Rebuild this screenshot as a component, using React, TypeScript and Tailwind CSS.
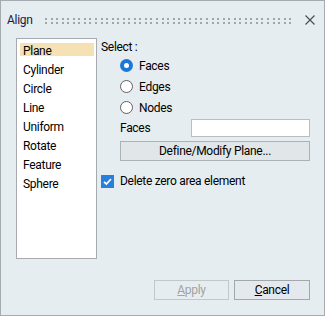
import React from "react";

const items = ["Plane", "Cylinder", "Circle", "Line", "Uniform", "Rotate", "Feature", "Sphere"];

function Grip() {
  const dots = [];
  for (let i = 0; i < 45; i++) {
    const x = Math.round(i * 5.55);
    dots.push(<rect key={"a" + i} x={x} y={0} width={2} height={2} fill="#a3a6a9" />);
    dots.push(<rect key={"b" + i} x={x} y={4} width={2} height={2} fill="#a3a6a9" />);
  }
  return (
    <svg width="250" height="6" className="block">
      {dots}
    </svg>
  );
}

function Radio({ label, checked }: { label: string; checked?: boolean }) {
  return (
    <div className="flex items-center h-[21px]">
      {checked ? (
        <svg width="13" height="13" className="block">
          <circle cx="6.5" cy="6.5" r="6.5" fill="#1a77dc" />
          <circle cx="6.5" cy="6.5" r="2.5" fill="#ffffff" />
        </svg>
      ) : (
        <svg width="13" height="13" className="block">
          <circle cx="6.5" cy="6.5" r="6" fill="#ffffff" stroke="#5f5f5f" strokeWidth="1" />
        </svg>
      )}
      <span className="ml-[6px]">{label}</span>
    </div>
  );
}

export default function App() {
  return (
    <div
      className="w-[325px] h-[316px] border border-[#a7abaf] bg-[#e6edf0] flex flex-col text-[12px] tracking-[-0.3px] text-black select-none"
      style={{ fontFamily: 'Roboto, "Liberation Sans", Arial, sans-serif' }}
    >
      {/* Title bar */}
      <div className="h-[37px] flex items-center pl-[6px] pr-[9px]">
        <span className="text-[#1a1a40] w-[38px] pt-[1px]">Align</span>
        <div className="flex-1 pt-[3px]">
          <Grip />
        </div>
        <svg width="10" height="10" className="block mt-[1px]">
          <path d="M0.5 0.5 L9.5 9.5 M9.5 0.5 L0.5 9.5" stroke="#4a4a4a" strokeWidth="1.1" />
        </svg>
      </div>

      {/* Body */}
      <div className="flex pl-[15px] pr-[14px]">
        <div className="w-[81px] h-[221px] border border-[#a7abaf] bg-white pt-[4px] pl-[3px] pr-[2px]">
          {items.map((it, i) => (
            <div
              key={it}
              className={`h-[13px] leading-[16px] pl-[3px] mb-[6px] ${i === 0 ? "bg-[#f5e1b4]" : ""}`}
            >
              {it}
            </div>
          ))}
        </div>

        <div className="flex-1 ml-[4px] pt-[1px]">
          <div className="h-[16px] leading-[16px]">Select :</div>
          <div className="pl-[19px]">
            <Radio label="Faces" checked />
            <Radio label="Edges" />
            <Radio label="Nodes" />
            <div className="flex items-center h-[18px] mt-[1px]">
              <span className="w-[71px]">Faces</span>
              <div className="flex-1 h-[18px] bg-white border border-[#b9bdc1]" />
            </div>
            <button className="w-full h-[20px] mt-[4px] bg-[#e1e6e9] border border-[#adb1b5] leading-[18px] text-black">
              Define/Modify Plane...
            </button>
          </div>
          <div className="flex items-center h-[16px] mt-[12px]">
            <svg width="13" height="13" className="block">
              <rect x="0" y="0" width="13" height="13" fill="#2b7fdc" />
              <path d="M3 6.8 L5.4 9 L10 4" stroke="#ffffff" strokeWidth="1.7" fill="none" />
            </svg>
            <span className="ml-[6px]">Delete zero area element</span>
          </div>
        </div>
      </div>

      {/* Footer */}
      <div className="mt-auto flex justify-end gap-[5px] pr-[14px] pb-[15px]">
        <button className="w-[75px] h-[20px] border border-[#c3c7cb] bg-[#e6edf0] text-[#a2a2a2] leading-[18px]">
          <span className="underline">A</span>pply
        </button>
        <button className="w-[76px] h-[20px] border border-[#a3a7ab] bg-[#e3e9ec] text-black leading-[18px]">
          <span className="underline">C</span>ancel
        </button>
      </div>
    </div>
  );
}
